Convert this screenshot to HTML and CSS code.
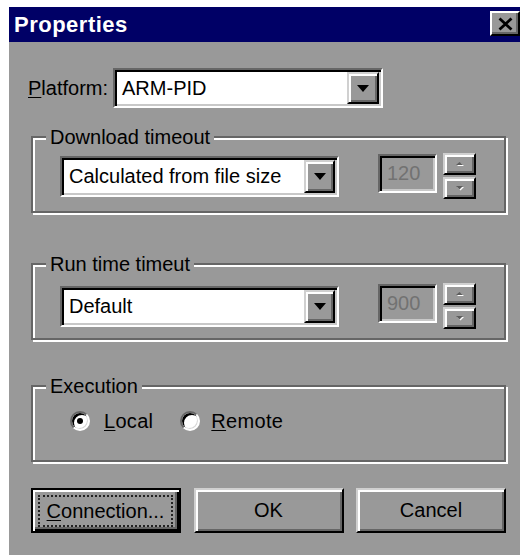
FILE: index.html
```html
<!DOCTYPE html>
<html lang="en">
<head>
<meta charset="utf-8">
<title>Properties</title>
<link rel="stylesheet" href="styles.css">
</head>
<body>
<div class="dialog">
  <div class="titlebar">
    <span class="title">Properties</span>
    <span class="close">
      <svg width="15" height="14" viewBox="0 0 15 14"><path d="M1.5 1.5 L13.5 12.5 M13.5 1.5 L1.5 12.5" stroke="#000" stroke-width="2.8"/></svg>
    </span>
  </div>

  <div class="content">
    <div class="platform-row">
      <span class="label"><u>P</u>latform:</span>
      <div class="combo combo-platform">
        <span class="combo-text">ARM-PID</span>
        <span class="drop raised"><svg width="12" height="7" viewBox="0 0 12 7"><polygon points="0,0 12,0 6,7" fill="#000"/></svg></span>
      </div>
    </div>

    <div class="group group-download">
      <span class="legend">Download timeout</span>
      <div class="group-row">
        <div class="combo combo-wide">
          <span class="combo-text">Calculated from file size</span>
          <span class="drop raised"><svg width="12" height="7" viewBox="0 0 12 7"><polygon points="0,0 12,0 6,7" fill="#000"/></svg></span>
        </div>
        <div class="edit">120</div>
        <div class="spin">
          <span class="spin-btn raised"><svg width="10" height="6" viewBox="0 0 10 6"><polygon points="2,5 5.5,2 9,5" fill="#fff"/><polygon points="1,4 4.5,1 8,4" fill="#5e5e5e"/></svg></span>
          <span class="spin-btn raised"><svg width="10" height="6" viewBox="0 0 10 6"><polygon points="2,2 9,2 5.5,5.5" fill="#fff"/><polygon points="1,1 8,1 4.5,4.5" fill="#5e5e5e"/></svg></span>
        </div>
      </div>
    </div>

    <div class="group group-runtime">
      <span class="legend">Run time timeut</span>
      <div class="group-row">
        <div class="combo combo-wide">
          <span class="combo-text">Default</span>
          <span class="drop raised"><svg width="12" height="7" viewBox="0 0 12 7"><polygon points="0,0 12,0 6,7" fill="#000"/></svg></span>
        </div>
        <div class="edit">900</div>
        <div class="spin">
          <span class="spin-btn raised"><svg width="10" height="6" viewBox="0 0 10 6"><polygon points="2,5 5.5,2 9,5" fill="#fff"/><polygon points="1,4 4.5,1 8,4" fill="#5e5e5e"/></svg></span>
          <span class="spin-btn raised"><svg width="10" height="6" viewBox="0 0 10 6"><polygon points="2,2 9,2 5.5,5.5" fill="#fff"/><polygon points="1,1 8,1 4.5,4.5" fill="#5e5e5e"/></svg></span>
        </div>
      </div>
    </div>

    <div class="group group-exec">
      <span class="legend">Execution</span>
      <div class="radio-row">
        <span class="radio checked"></span>
        <span class="radio-label"><u>L</u>ocal</span>
        <span class="radio radio-second"></span>
        <span class="radio-label"><u>R</u>emote</span>
      </div>
    </div>

    <div class="buttons">
      <div class="btn btn-default"><span class="focus"><u>C</u>onnection...</span></div>
      <div class="btn raised">OK</div>
      <div class="btn raised">Cancel</div>
    </div>
  </div>
</div>
</body>
</html>
```

FILE: styles.css
```css
* {
  box-sizing: border-box;
}

html,
body {
  margin: 0;
  background: #fff;
  overflow: hidden;
}

body {
  width: 520px;
  height: 555px;
  font-family: "Liberation Sans", Arial, sans-serif;
  font-size: 20px;
  color: #000;
}

u {
  text-decoration-thickness: 1px;
  text-underline-offset: 2px;
}

/* window frame */
.dialog {
  margin: 7px 0 0 9px;
  width: 514px;
  height: 560px;
  background: #999;
}

.titlebar {
  height: 35px;
  background: #000066;
  display: flex;
  align-items: center;
  justify-content: space-between;
  padding: 0 3px 0 5px;
}

.title {
  color: #fff;
  font-weight: bold;
  font-size: 22px;
  letter-spacing: 0.5px;
}

.close {
  align-self: flex-start;
  margin-top: 4px;
  width: 30px;
  height: 25px;
  background: #999;
  border: 2px solid;
  border-color: #fff #000 #000 #fff;
  box-shadow: inset -2px -2px 0 #666;
  display: flex;
  align-items: center;
  justify-content: center;
}

.content {
  padding: 26px 17px 0 22px;
}

/* 3D bevels */
.raised {
  background: #999;
  border: 2px solid;
  border-color: #d0d0d0 #000 #000 #d0d0d0;
  box-shadow: inset 2px 2px 0 #fff, inset -2px -2px 0 #666;
}

/* platform selector */
.platform-row {
  display: flex;
  align-items: center;
  gap: 5px;
  margin-left: -3px;
  height: 40px;
}

.combo {
  display: flex;
  background: #fff;
  border: 2px solid;
  border-color: #666 #fff #fff #666;
  box-shadow: inset 2px 2px 0 #000, inset -2px -2px 0 #c8c8c8;
  padding: 2px;
}

.combo-platform {
  width: 270px;
  height: 40px;
}

.combo-wide {
  width: 279px;
  height: 41px;
}

.combo-text {
  flex: 1;
  padding-left: 5px;
  display: flex;
  align-items: center;
  white-space: nowrap;
}

.drop {
  width: 32px;
  display: flex;
  align-items: center;
  justify-content: center;
}

.combo-wide .drop {
  width: 31px;
}

/* group boxes */
.group {
  position: relative;
  border: 2px solid #666;
  box-shadow: inset 2px 2px 0 #fff, 2px 2px 0 #fff;
}

.legend {
  position: absolute;
  left: 13px;
  top: -11px;
  line-height: 20px;
  padding: 0 4px;
  background: #999;
  white-space: nowrap;
}

.group-download {
  margin-top: 28px;
  padding: 15px 0 12px 27px;
}

.group-runtime {
  margin-top: 50px;
  padding: 18px 0 9px 27px;
}

.group-exec {
  margin-top: 45px;
  padding: 24px 0 29px 37px;
}

.group-row {
  display: flex;
  align-items: center;
}

.edit {
  margin-left: 39px;
  margin-bottom: 5px;
  width: 59px;
  height: 39px;
  border: 2px solid;
  border-color: #666 #fff #fff #666;
  box-shadow: inset 2px 2px 0 #000, inset -2px -2px 0 #c8c8c8;
  padding-left: 7px;
  display: flex;
  align-items: center;
  color: #727272;
}

.spin {
  margin-left: 6px;
  width: 33px;
  display: flex;
  flex-direction: column;
  gap: 2px;
}

.spin-btn {
  height: 22px;
  display: flex;
  align-items: center;
  justify-content: center;
}

/* radio buttons */
.radio-row {
  display: flex;
  align-items: center;
  height: 20px;
}

.radio {
  position: relative;
  width: 20px;
  height: 20px;
  border-radius: 50%;
  background: #fff;
  border: 2px solid;
  border-color: #666 #fff #fff #666;
  box-shadow: inset 2px 2px 0 #000, inset -1px -1px 0 #d8d8d8;
}

.radio.checked::after {
  content: "";
  position: absolute;
  left: 5px;
  top: 5px;
  width: 6px;
  height: 6px;
  border-radius: 50%;
  background: #000;
}

.radio-label {
  margin-left: 14px;
  letter-spacing: 0.3px;
}

.radio-second {
  margin-left: 27px;
}

.radio-second + .radio-label {
  margin-left: 11px;
}

/* command buttons */
.buttons {
  margin-top: 26px;
  display: flex;
  justify-content: space-between;
}

.btn {
  width: 150px;
  height: 45px;
  display: flex;
  align-items: center;
  justify-content: center;
}

.btn-default {
  background: #999;
  border: 2px solid #000;
  box-shadow: inset 2px 2px 0 #fff, inset -2px -2px 0 #000, inset -4px -4px 0 #666;
  padding: 5px 6px 4px 5px;
}

.focus {
  flex: 1;
  align-self: stretch;
  display: flex;
  align-items: center;
  justify-content: center;
  border: 2px dotted #222;
}
```
